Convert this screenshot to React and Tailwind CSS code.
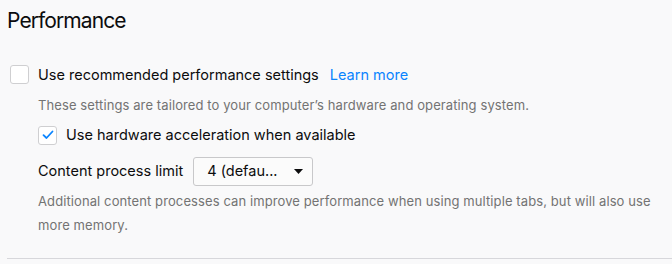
import React from 'react';

const Checkbox = ({ checked }) => (
  <span className="w-[19px] h-[19px] shrink-0 rounded-[3px] border border-[#cfcfd1] bg-white flex items-center justify-center">
    {checked && (
      <svg width="12" height="10" viewBox="0 0 12 10" fill="none">
        <path d="M1.5 5.2 L4.5 8 L10.5 1.5" stroke="#0a84ff" strokeWidth="1.8" strokeLinecap="round" strokeLinejoin="round" />
      </svg>
    )}
  </span>
);

export default function App() {
  return (
    <div className="w-[672px] h-[264px] bg-[#f9f9fa] text-[#0c0c0d] overflow-hidden font-['Inter',sans-serif]">
      <div className="pl-[7px] pt-[7px]">
        <h1 className="text-[21px] leading-[28px] font-normal tracking-[-0.9px]">Performance</h1>
      </div>

      <div className="pl-[10px] mt-[30px]">
        {/* Recommended settings */}
        <div className="flex items-center h-[19px]">
          <Checkbox />
          <span className="ml-[9px] text-[14.5px]">Use recommended performance settings</span>
          <span className="ml-[11px] text-[14.5px] text-[#0a84ff]">Learn more</span>
        </div>

        <div className="pl-[28px]">
          <p className="mt-[12px] text-[13px] tracking-[0.1px] text-[#737373]">These settings are tailored to your computer’s hardware and operating system.</p>

          <div className="flex items-center mt-[10px] h-[19px]">
            <Checkbox checked />
            <span className="ml-[9px] text-[14.5px]">Use hardware acceleration when available</span>
          </div>

          <div className="flex items-center mt-[12px]">
            <span className="text-[14.5px]">Content process limit</span>
            <div className="ml-[10px] w-[120px] h-[29px] rounded-[3px] border border-[#c8c8ca] bg-[#fbfbfb] flex items-center justify-between pl-[13px] pr-[9px]">
              <span className="text-[14.5px]">4 (defau...</span>
              <svg width="9" height="5" viewBox="0 0 9 5">
                <path d="M0 0 H9 L4.5 5 Z" fill="#0c0c0d" />
              </svg>
            </div>
          </div>

          <p className="mt-[3px] text-[13px] tracking-[0.1px] leading-[24px] text-[#737373] w-[620px]">
            Additional content processes can improve performance when using multiple tabs, but will also use more memory.
          </p>
        </div>
      </div>

      <div className="ml-[7px] mt-[21px] border-t border-[#d7d7db]" />
    </div>
  );
}
